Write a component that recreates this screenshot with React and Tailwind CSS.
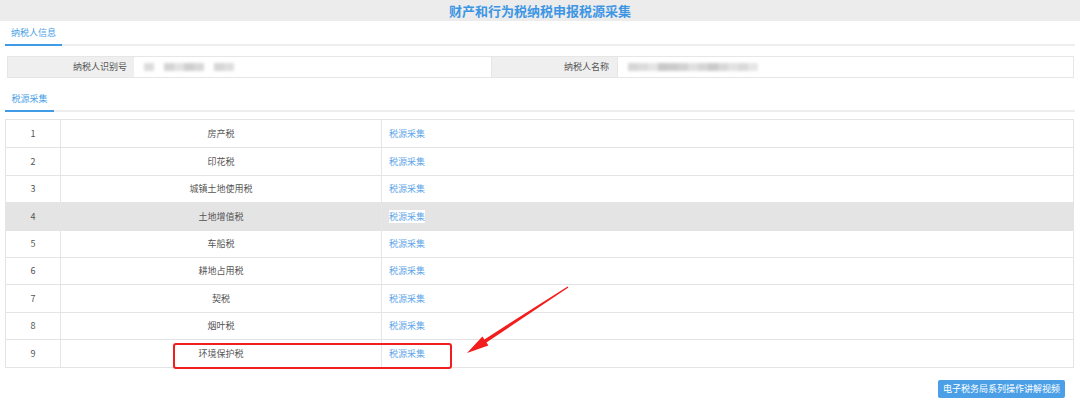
import React from 'react';

const taxes = [
  '房产税',
  '印花税',
  '城镇土地使用税',
  '土地增值税',
  '车船税',
  '耕地占用税',
  '契税',
  '烟叶税',
  '环境保护税',
];

// blurred masked values (grey blocks)
const BlurValue = ({ blocks }) => (
  <div className="flex items-center h-full pl-[10px] blur-[1.5px]">
    {blocks.map((c, i) => (
      <div key={i} className="h-[8px] w-[10px]" style={{ backgroundColor: c }} />
    ))}
  </div>
);

const TabBar = ({ label, width }) => (
  <div className="mx-[5px] border-b-2 border-[#eeeeee] flex">
    <div
      className={`h-[24px] -mb-[2px] flex items-center justify-center border-b-2 border-[#3f9be6] text-[9px] text-[#4a9fe6] ${width}`}
    >
      {label}
    </div>
  </div>
);

const App = () => {
  return (
    <div className="relative w-[1080px] h-[418px] bg-white overflow-hidden font-['Noto_Sans_CJK_SC','Noto_Sans',sans-serif]">
      {/* title bar */}
      <div className="h-[21px] bg-[#ececec] flex items-center justify-center">
        <span className="text-[13px] font-bold text-[#3d96e4] leading-none">财产和行为税纳税申报税源采集</span>
      </div>

      <div className="pt-[1px]">
        <TabBar label="纳税人信息" width="w-[57px]" />
      </div>

      {/* taxpayer info */}
      <div className="mt-[10px] ml-[7px] mr-[6px] h-[22px] flex border border-[#e6e6e6] text-[9px] text-[#555]">
        <div className="w-[126px] bg-[#efefef] flex items-center justify-end pr-[7px]">纳税人识别号</div>
        <div className="w-[358px] bg-white border-r border-[#e6e6e6]">
          <BlurValue blocks={['#dcdcdc', '#fff', '#d4d4d4', '#e2e2e2', '#cfcfcf', '#d8d8d8', '#fff', '#d6d6d6', '#dedede']} />
        </div>
        <div className="w-[126px] bg-[#efefef] flex items-center justify-end pr-[8px] border-r border-[#e6e6e6]">纳税人名称</div>
        <div className="flex-1 bg-white">
          <BlurValue blocks={['#d6d6d6', '#dcdcdc', '#e4e4e4', '#c8c8c8', '#cccccc', '#d2d2d2', '#e0e0e0', '#d6d6d6', '#cacaca', '#d8d8d8', '#e2e2e2', '#dadada', '#e6e6e6']} />
        </div>
      </div>

      <div className="mt-[10px]">
        <TabBar label="税源采集" width="w-[49px]" />
      </div>

      {/* tax source table */}
      <div className="mt-[7px] ml-[5px] mr-[6px] border border-[#e4e4e4]">
        {taxes.map((t, i) => (
          <div
            key={t}
            className={`h-[27.4px] flex text-[9px] text-[#555] ${i > 0 ? 'border-t border-[#e4e4e4]' : ''} ${i === 3 ? 'bg-[#e4e4e4]' : 'bg-white'}`}
          >
            <div className="w-[55px] flex items-center justify-center border-r border-[#e6e6e6]">{i + 1}</div>
            <div className="w-[321px] flex items-center justify-center border-r border-[#e6e6e6]">{t}</div>
            <div className="flex-1 flex items-center pl-[7px]">
              <span className={`text-[#5ea6e8] ${i === 3 ? 'bg-white' : ''}`}>税源采集</span>
            </div>
          </div>
        ))}
      </div>

      <div className="flex justify-end mt-[12px] mr-[15px]">
        <button className="h-[18px] w-[127px] rounded-[2px] bg-[#4a9fe6] text-white text-[9px] flex items-center justify-center">
          电子税务局系列操作讲解视频
        </button>
      </div>

      {/* annotation: red highlight box */}
      <div className="absolute left-[173px] top-[343px] w-[279px] h-[26px] border-2 border-[#f21d1d] rounded-[3px]" />

      {/* annotation: red arrow */}
      <svg className="absolute inset-0 pointer-events-none" width="1080" height="418" viewBox="0 0 1080 418">
        <polygon
          fill="#f21d1d"
          points="567.6,286.4 484.4,339.4 482.4,336.5 467,353 488.4,345.4 486.4,342.6 568.4,287.6"
        />
      </svg>
    </div>
  );
};

export default App;
